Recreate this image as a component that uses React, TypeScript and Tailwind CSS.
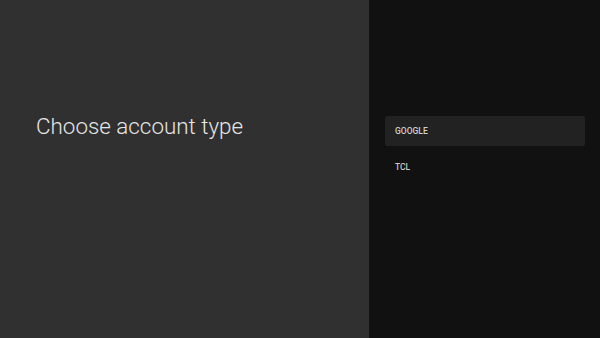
export default function App() {
  return (
    <div className="w-[600px] h-[338px] flex overflow-hidden" style={{ fontFamily: 'Roboto, "Noto Sans", sans-serif' }}>
      <div className="w-[369px] flex-none bg-[#303030] flex flex-col pt-[112px] pl-[36px]">
        <h1 className="text-[22.4px] font-light text-[#e6e6e6] leading-[28px]">Choose account type</h1>
      </div>
      <div className="flex-1 bg-[#111111] flex flex-col pt-[116px] pl-[16px] pr-[15px]">
        <div className="h-[30px] rounded-[2px] bg-[#222222] flex items-center px-[10px] pt-[1px]">
          <span className="text-[8.5px] font-medium text-[#d0d0d0]">GOOGLE</span>
        </div>
        <div className="h-[42px] flex items-center px-[10px] pt-[1px]">
          <span className="text-[8.5px] font-medium text-[#c8c8c8]">TCL</span>
        </div>
      </div>
    </div>
  );
}
